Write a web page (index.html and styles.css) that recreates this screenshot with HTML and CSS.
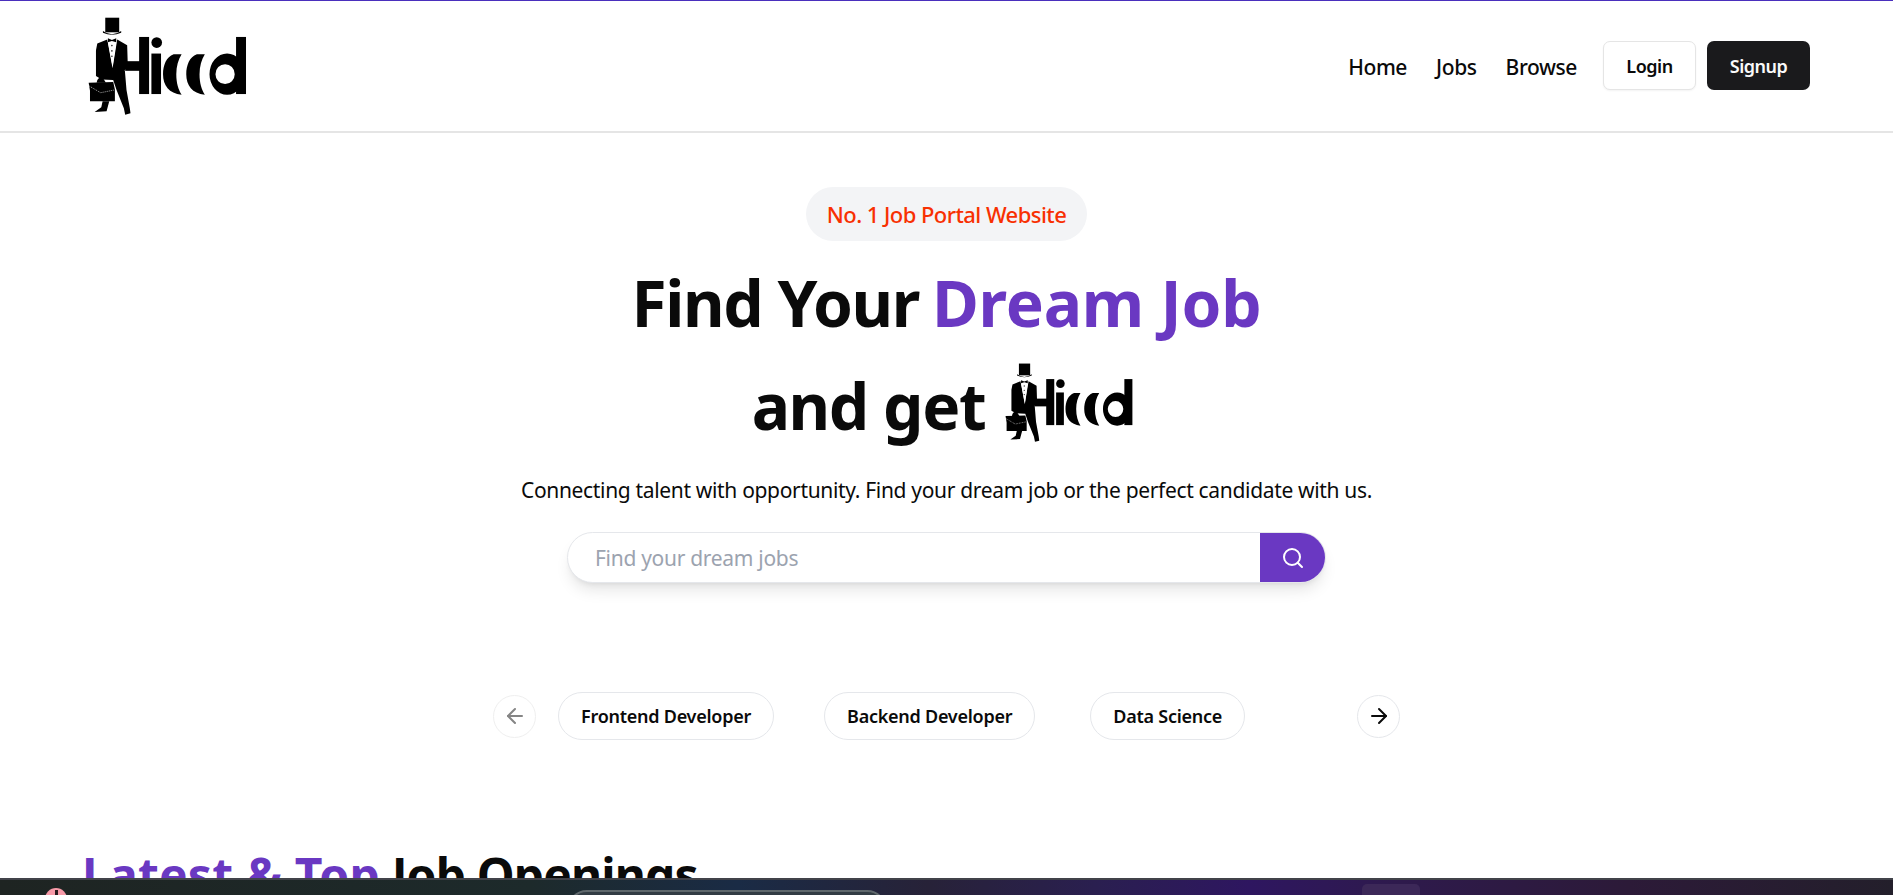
FILE: index.html
```html
<!DOCTYPE html>
<html lang="en">
<head>
<meta charset="utf-8">
<title>Hicrd</title>
<link rel="stylesheet" href="styles.css">
</head>
<body>
<svg class="defs" width="0" height="0" aria-hidden="true">
  <symbol id="logo" viewBox="84 50 482 295">
    <rect x="136" y="52" width="42" height="44"/>
    <path d="M129 92 Q156 112 184 92 L184 97 Q156 109 129 97Z"/>
    <path d="M142 118 L112 130 L108 150 L108 228 L125 238 L160 240 L190 215 L204 200 L202 135 L172 118 L158 204Z"/>
    <path d="M143 120 L170 120 L158 200Z" fill="#fff"/>
    <path d="M144 114 L156 119 L169 114 L169 126 L156 122 L144 126Z"/>
    <circle cx="156" cy="136" r="2.5" fill="#333"/><circle cx="156" cy="152" r="2.5" fill="#333"/><circle cx="156" cy="168" r="2.5" fill="#333"/>
    <path d="M150 210 L195 210 L200 270 L210 325 L212 340 L196 344 L192 325 L170 270Z"/>
    <path d="M128 304 L148 304 L140 334 L104 336 L124 322Z"/>
    <path d="M86 248 L160 246 L165 268 L165 304 L90 304 L90 272Z"/>
    <path d="M110 248 Q112 230 128 232 L138 248Z"/>
    <path d="M88 258 L122 278 L162 270" fill="none" stroke="#aaa" stroke-width="3" stroke-dasharray="3 3"/>
    <rect x="196" y="183" width="46" height="29"/>
    <rect x="238" y="110" width="30" height="172"/>
    <circle cx="291" cy="127" r="16"/>
    <rect x="275" y="160" width="29" height="122"/>
    <path d="M366 162 L342 162 C320 170 310 195 310 222 C310 255 328 280 366 284 C356 268 350 248 350 222 C350 198 356 178 366 162Z"/>
    <path d="M436 162 L412 162 C390 170 380 195 380 222 C380 255 398 280 436 284 C426 268 420 248 420 222 C420 198 426 178 436 162Z"/>
    <path fill-rule="evenodd" d="M450 222 A53 62 0 1 1 556 222 A53 62 0 1 1 450 222Z M468 222 A29 30 0 1 0 526 222 A29 30 0 1 0 468 222Z"/>
    <rect x="530" y="110" width="30" height="172"/>
  </symbol>
</svg>

<header class="nav">
  <svg class="logo" role="img" aria-label="Hicrd"><use href="#logo"/></svg>
  <div class="nav-right">
    <ul class="links">
      <li>Home</li>
      <li>Jobs</li>
      <li>Browse</li>
    </ul>
    <div class="auth">
      <button class="btn btn-outline">Login</button>
      <button class="btn btn-dark">Signup</button>
    </div>
  </div>
</header>

<main>
  <section class="hero">
    <span class="badge">No. 1 Job Portal Website</span>
    <h1 class="title">
      <span class="title-line"><span class="tight">Find Your</span> <em>Dream Job</em></span>
      <span class="title-line"><span class="tight">and get</span> <svg class="logo-small" role="img" aria-label="Hicrd"><use href="#logo"/></svg></span>
    </h1>
    <p class="lead">Connecting talent with opportunity. Find your dream job or the perfect candidate with us.</p>
    <div class="search">
      <input class="search-input" type="text" placeholder="Find your dream jobs">
      <button class="search-btn" aria-label="Search">
        <svg width="24" height="24" viewBox="0 0 24 24" fill="none" stroke="currentColor" stroke-width="2" stroke-linecap="round" stroke-linejoin="round"><circle cx="11" cy="11" r="8"/><path d="m21 21-4.3-4.3"/></svg>
      </button>
    </div>
  </section>

  <section class="carousel">
    <button class="arrow arrow-off" aria-label="Previous">
      <svg width="24" height="24" viewBox="0 0 24 24" fill="none" stroke="currentColor" stroke-width="2" stroke-linecap="round" stroke-linejoin="round"><path d="m12 19-7-7 7-7"/><path d="M19 12H5"/></svg>
    </button>
    <div class="track">
      <button class="chip">Frontend Developer</button>
      <button class="chip">Backend Developer</button>
      <button class="chip">Data Science</button>
    </div>
    <button class="arrow" aria-label="Next">
      <svg width="24" height="24" viewBox="0 0 24 24" fill="none" stroke="currentColor" stroke-width="2" stroke-linecap="round" stroke-linejoin="round"><path d="M5 12h14"/><path d="m12 5 7 7-7 7"/></svg>
    </button>
  </section>

  <section class="jobs">
    <h2 class="jobs-title"><em>Latest &amp; Top</em> Job Openings</h2>
  </section>
</main>

<div class="taskbar">
  <span class="tb-alert"></span>
  <span class="tb-search"></span>
  <span class="tb-app"></span>
</div>
</body>
</html>
```
FILE: styles.css
```css
* { box-sizing: border-box; }
html, body { height: 100%; overflow: hidden; }
body {
  margin: 0;
  background: #fff;
  color: #0a0a0a;
  font-family: "Noto Sans", "Open Sans", sans-serif;
  border-top: 1px solid #4a2fbd;
}
.defs { position: absolute; }
button { font-family: inherit; cursor: pointer; }

.nav {
  height: 132px;
  padding: 0 83px 0 88px;
  display: flex;
  align-items: center;
  justify-content: space-between;
  border-bottom: 2px solid #e5e5e5;
}
.logo { width: 160px; height: 98px; display: block; }
.nav-right { display: flex; align-items: center; gap: 26px; }
.links {
  list-style: none;
  margin: 2px 0 0;
  padding: 0;
  display: flex;
  gap: 29px;
  font-size: 21px;
  font-weight: 500;
  letter-spacing: -0.4px;
}
.auth { display: flex; gap: 11px; margin-top: -1px; }
.btn {
  height: 49px;
  border-radius: 7px;
  font-size: 18px;
  font-weight: 600;
  letter-spacing: -0.5px;
}
.btn-outline { width: 93px; background: #fff; border: 1px solid #e5e5e5; color: #0a0a0a; box-shadow: 0 1px 2px rgba(0,0,0,.05); }
.btn-dark { width: 103px; background: #1a1a1c; border: 0; color: #fafafa; }

.hero { display: flex; flex-direction: column; align-items: center; padding-top: 54px; }
.badge {
  height: 54px;
  padding: 0 21px;
  display: flex;
  align-items: center;
  border-radius: 27px;
  background: #f3f4f6;
  color: #f83002;
  font-size: 22px;
  font-weight: 500;
  letter-spacing: -0.55px;
}
.title {
  margin: 10px 0 0;
  font-size: 64px;
  line-height: 103px;
  font-weight: 700;
  letter-spacing: -0.2px;
  text-align: center;
}
.title-line { display: flex; justify-content: center; align-items: center; gap: 13px; height: 103px; }
.tight { letter-spacing: -1.4px; }
.title em { font-style: normal; color: #6a38c2; }
.logo-small { width: 129px; height: 79px; display: block; margin: 0 7px 7px 7px; }
.lead { margin: 18px 0 0; font-size: 21px; line-height: 30px; letter-spacing: -0.33px; }
.search {
  margin-top: 27px;
  width: 759px;
  height: 51px;
  display: flex;
  border: 1px solid #e5e7eb;
  border-radius: 26px;
  overflow: hidden;
  box-shadow: 0 10px 15px -3px rgba(0,0,0,.1), 0 4px 6px -4px rgba(0,0,0,.1);
  background: #fff;
}
.search-input {
  flex: 1;
  min-width: 0;
  padding: 0 27px;
  border: 0;
  outline: 0;
  background: transparent;
  font-family: inherit;
  font-size: 21px;
  letter-spacing: -0.3px;
}
.search-input::placeholder { color: #9ca3af; opacity: 1; }
.search-btn {
  width: 65px;
  border: 0;
  background: #6a38c2;
  color: #fff;
  display: flex;
  align-items: center;
  justify-content: center;
}

.carousel {
  margin: 109px auto 0;
  width: 907px;
  display: flex;
  align-items: center;
  gap: 22px;
}
.track { flex: 1; display: flex; gap: 50px; }
.arrow {
  width: 43px;
  height: 43px;
  padding: 0;
  flex: none;
  border: 1px solid #e5e7eb;
  border-radius: 50%;
  background: #fff;
  color: #0a0a0a;
  display: flex;
  align-items: center;
  justify-content: center;
}
.arrow-off { color: #858585; border-color: #efefef; }
.chip {
  height: 48px;
  padding: 0 22px;
  border: 1px solid #e5e7eb;
  border-radius: 24px;
  background: #fff;
  color: #0a0a0a;
  font-size: 18px;
  font-weight: 600;
  letter-spacing: -0.25px;
}
.chip:last-child { margin-left: 5px; }

.jobs { padding: 111px 82px 0; }
.jobs-title { margin: 0; font-size: 48px; line-height: 48px; font-weight: 700; letter-spacing: -0.9px; }
.jobs-title em { font-style: normal; color: #6a38c2; letter-spacing: 0.2px; }

.taskbar {
  position: fixed;
  left: 0;
  right: 0;
  bottom: 0;
  height: 17px;
  border-top: 2px solid #41434a;
  background: linear-gradient(90deg, #1e2422 0, #1d2a2b 28%, #1a2b45 39%, #272238 49%, #2a1f50 58%, #2e1660 66%, #2e1a4c 74%, #2c1a38 86%, #231f2b 100%);
}
.tb-alert {
  position: absolute;
  left: 45px;
  top: 8px;
  width: 22px;
  height: 22px;
  border-radius: 50%;
  background: #f79aa8;
}
.tb-alert::after {
  content: "";
  position: absolute;
  left: 10px;
  top: 2px;
  width: 3px;
  height: 6px;
  background: #2a1a1e;
}
.tb-search {
  position: absolute;
  left: 567px;
  top: 10px;
  width: 320px;
  height: 40px;
  border-radius: 20px;
  background: #323c44;
  border: 2px solid #5f686c;
}
.tb-app {
  position: absolute;
  left: 1362px;
  top: 4px;
  width: 58px;
  height: 30px;
  border-radius: 5px;
  background: #3c2858;
}
```
